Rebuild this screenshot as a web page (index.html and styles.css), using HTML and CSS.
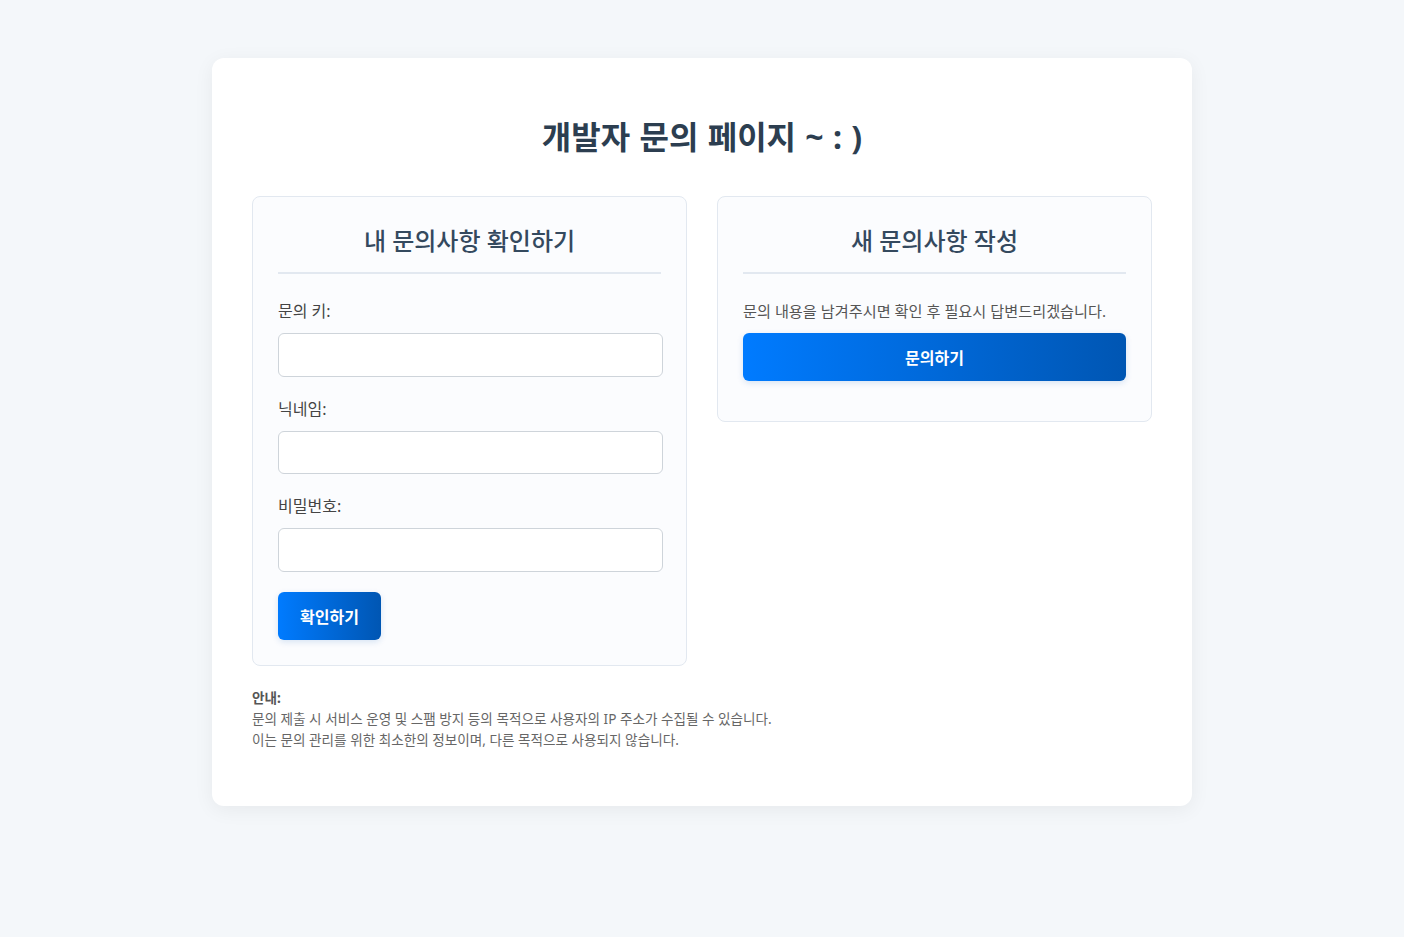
FILE: index.html
```html
<!DOCTYPE html>
<html lang="ko">
<head>
    <meta charset="UTF-8">
    <meta name="viewport" content="width=device-width, initial-scale=1.0">
    <title>개발자 문의 페이지</title>
    <link rel="stylesheet" href="styles.css">
</head>
<body>

    <div class="container">
        <h1>개발자 문의 페이지 ~ : )</h1>

        <div class="sections">
            <!-- 내 문의사항 확인 -->
            <section class="card">
                <h2>내 문의사항 확인하기</h2>
                <form id="check-form">
                    <div class="form-group">
                        <label for="inquiry-key">문의 키:</label>
                        <input type="text" id="inquiry-key">
                    </div>
                    <div class="form-group">
                        <label for="nickname">닉네임:</label>
                        <input type="text" id="nickname">
                    </div>
                    <div class="form-group">
                        <label for="password">비밀번호:</label>
                        <input type="password" id="password">
                    </div>
                    <button type="submit" class="btn">확인하기</button>
                </form>
            </section>

            <!-- 새 문의사항 작성 -->
            <section class="card">
                <h2>새 문의사항 작성</h2>
                <p class="desc">문의 내용을 남겨주시면 확인 후 필요시 답변드리겠습니다.</p>
                <button type="button" class="btn btn-block">문의하기</button>
            </section>
        </div>

        <div class="notice">
            <strong>안내:</strong><br>
            문의 제출 시 서비스 운영 및 스팸 방지 등의 목적으로 사용자의 IP 주소가 수집될 수 있습니다.<br>
            이는 문의 관리를 위한 최소한의 정보이며, 다른 목적으로 사용되지 않습니다.
        </div>
    </div>

</body>
</html>
```

FILE: styles.css
```css
body {
    font-family: "Noto Sans", "Noto Sans CJK KR", sans-serif;
    margin: 0;
    padding: 58px 0;
    background-color: #f4f7fa;
    color: #333;
}

.container {
    width: 900px;
    margin: 0 auto;
    padding: 40px;
    background: #fff;
    border-radius: 12px;
    box-shadow: 0 4px 20px rgba(0, 0, 0, 0.06);
}

h1 {
    margin: 20px 0 40px;
    font-size: 32px;
    line-height: 38px;
    text-align: center;
    color: #2c3e50;
    word-spacing: 1px;
}

.sections {
    display: grid;
    grid-template-columns: 1fr 1fr;
    gap: 30px;
    align-items: start;
}

/* Cards */
.card {
    background: #fbfcfe;
    border: 1px solid #e2e8f0;
    border-radius: 8px;
    padding: 25px;
}

.card h2 {
    margin: 0 0 25px;
    padding-bottom: 12px;
    border-bottom: 2px solid #e2e8f0;
    font-size: 24px;
    font-weight: 500;
    line-height: 38px;
    text-align: center;
    color: #34495e;
}

.form-group {
    margin-bottom: 20px;
}

.form-group label {
    display: block;
    margin-bottom: 10px;
    font-size: 16px;
    line-height: 24px;
    color: #444;
}

.form-group input {
    display: block;
    box-sizing: border-box;
    width: calc(100% + 2px);
    height: 43.5px;
    padding: 10px 12px;
    border: 1px solid #ced4da;
    border-radius: 6px;
    background: #fff;
    font-size: 15px;
}

.desc {
    margin: 0 0 10px;
    font-size: 15.2px;
    line-height: 24px;
    color: #555;
}

/* Buttons */
.btn {
    height: 48px;
    padding: 0 22px;
    border: none;
    border-radius: 6px;
    background: linear-gradient(to right, #007bff, #0056b3);
    box-shadow: 0 2px 6px rgba(0, 86, 179, 0.15);
    color: #fff;
    font-family: inherit;
    font-size: 16px;
    font-weight: 700;
    cursor: pointer;
}

.btn-block {
    display: block;
    width: 100%;
    margin-bottom: 15px;
}

/* Notice */
.notice {
    margin-top: 21px;
    padding-bottom: 16px;
    font-size: 13.6px;
    line-height: 21px;
    color: #666;
}

.notice strong {
    color: #555;
}
```
